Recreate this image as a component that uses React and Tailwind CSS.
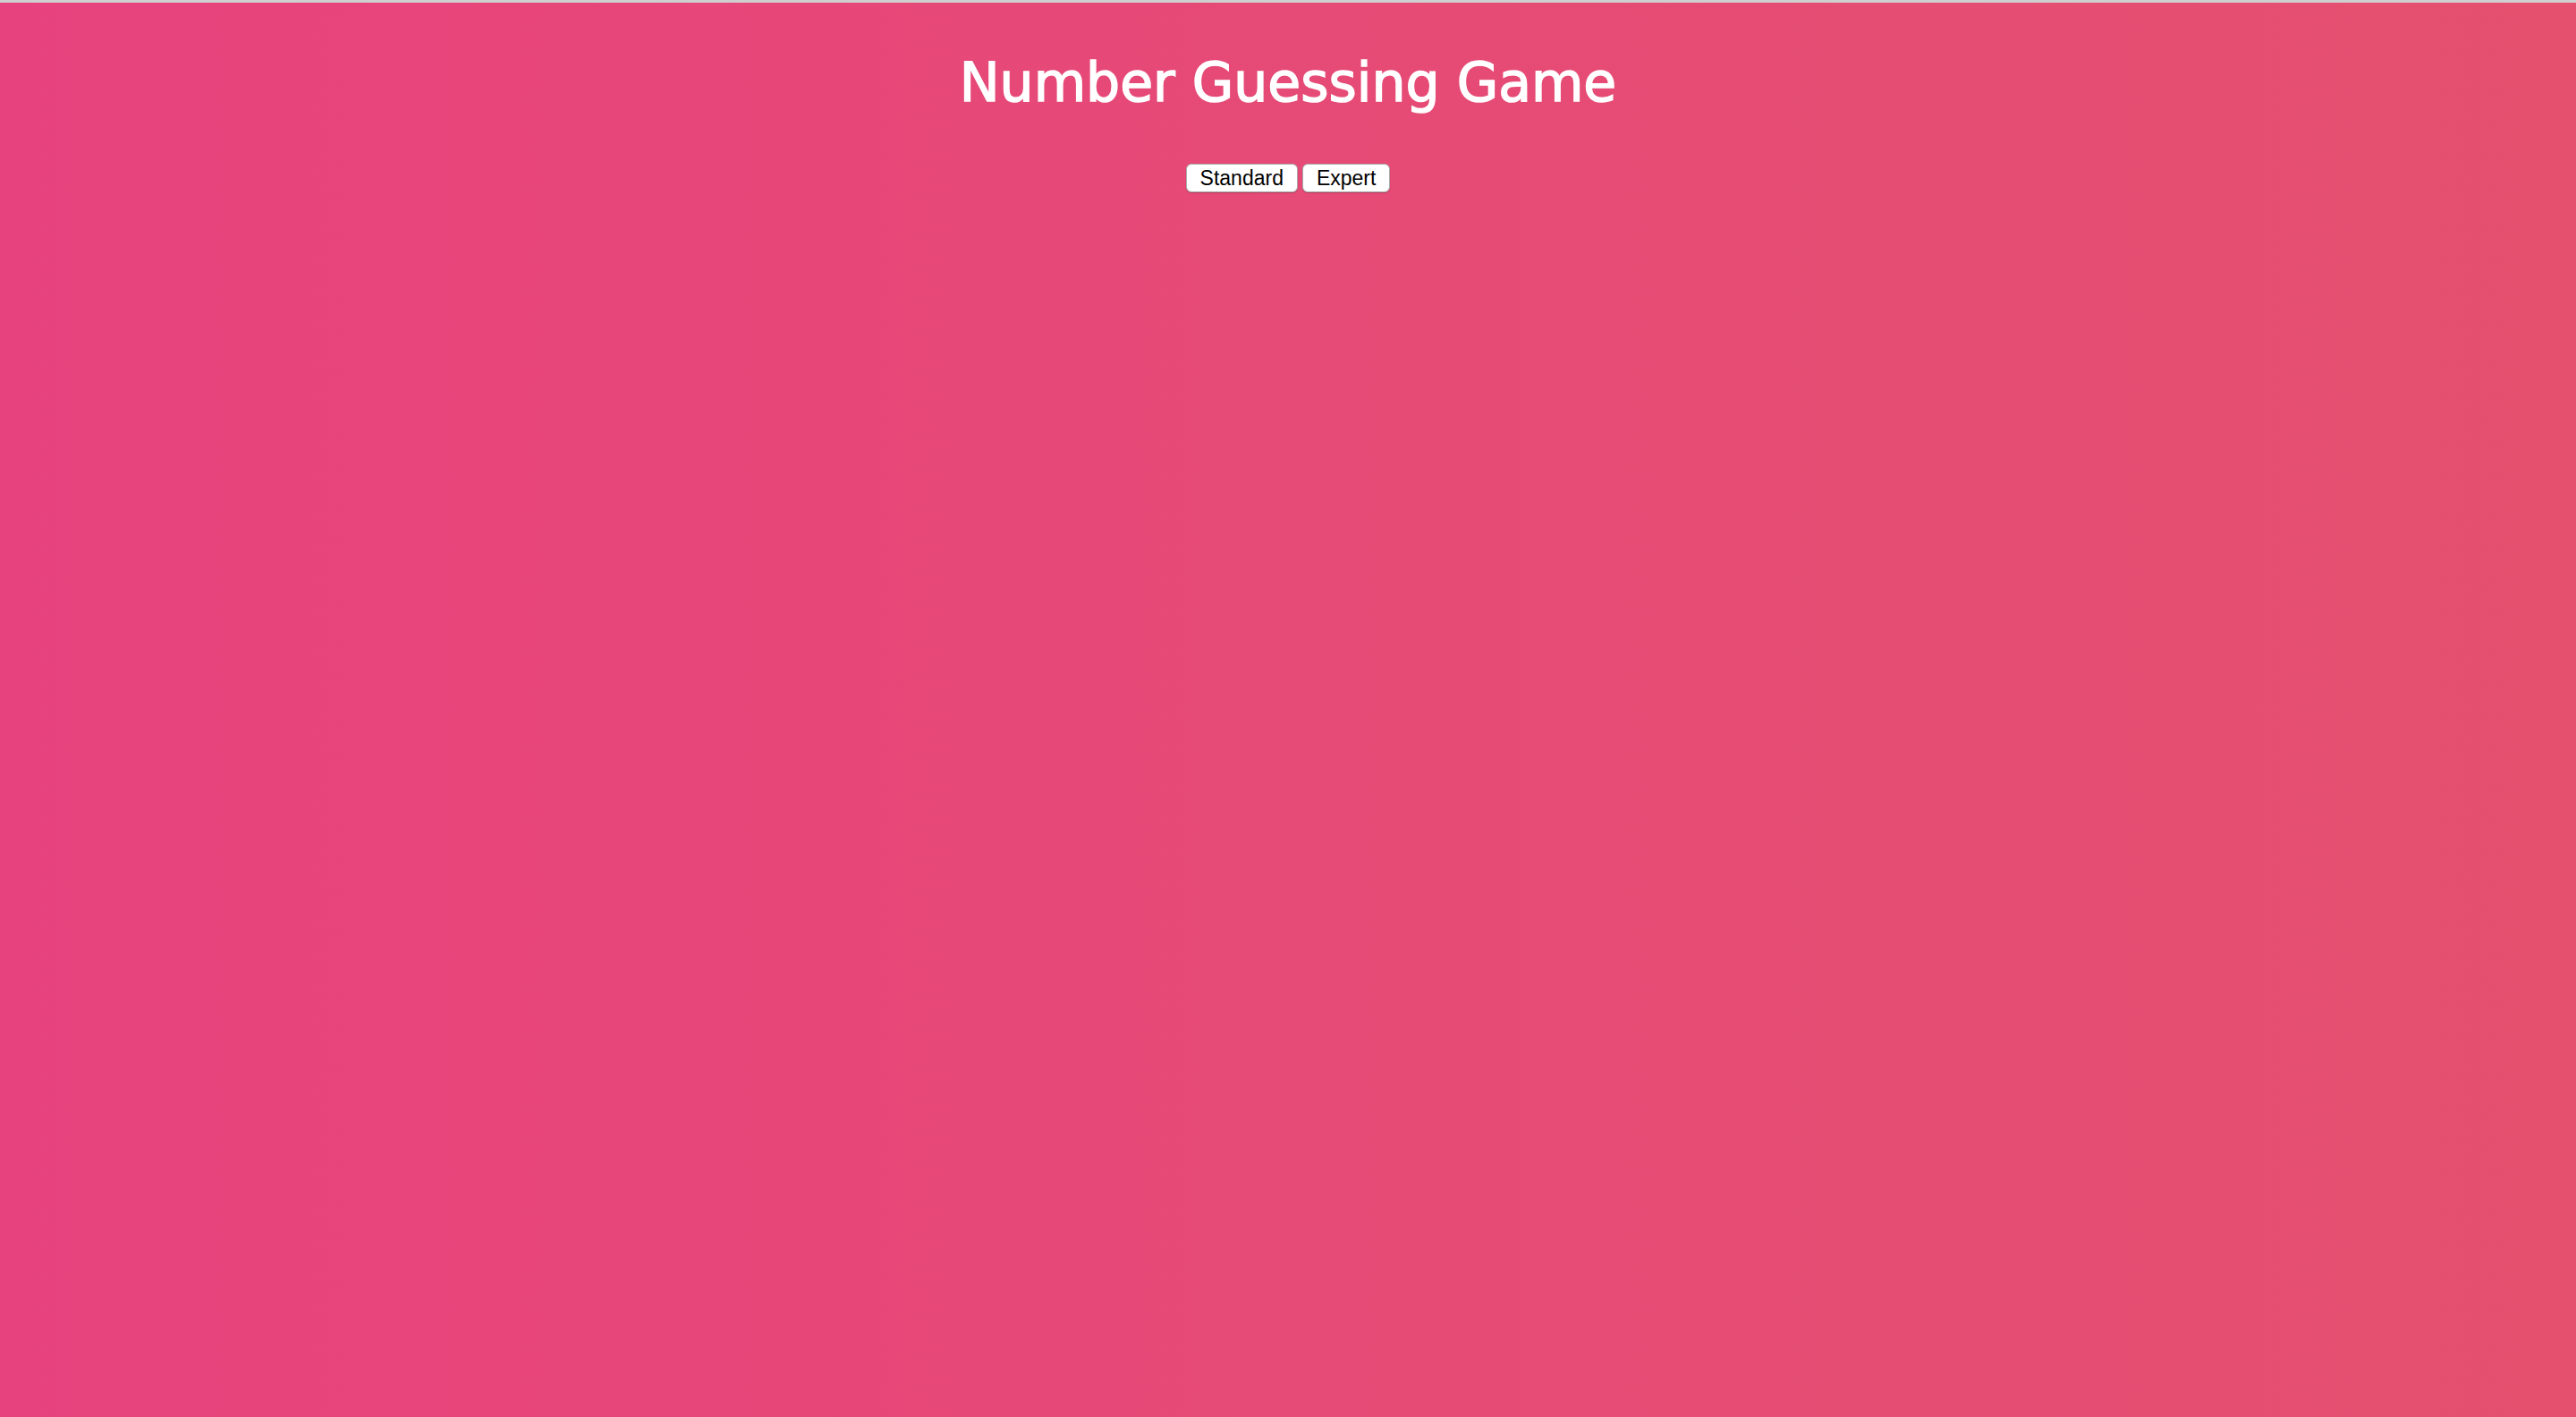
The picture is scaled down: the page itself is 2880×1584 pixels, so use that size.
import { useState } from 'react';

const levels = ['Standard', 'Expert'];

const App = () => {
  const [level, setLevel] = useState(null);

  return (
    <div className="min-h-screen w-full border-t-[3px] border-[#cfcfcf] bg-gradient-to-r from-[#e7427d] via-[#e64a76] to-[#e5506f] font-['Liberation_Sans',sans-serif]">
      <div className="flex flex-col items-center pt-[51px]">
        {/* Title */}
        <h1 className="text-[60px] leading-[76px] text-white font-['DejaVu_Sans',sans-serif] [-webkit-text-stroke:1.5px_white]">
          Number Guessing Game
        </h1>

        {/* Level picker */}
        <div className="mt-[53px] flex gap-[5px]">
          {levels.map((name) => (
            <button
              key={name}
              onClick={() => setLevel(name)}
              className="h-[32px] rounded-[6px] border border-[#a9a9a9] bg-white px-[15px] text-[23px] leading-none text-black shadow-[0_1px_1px_rgba(0,0,0,0.2)]"
            >
              {name}
            </button>
          ))}
        </div>
        {level && <p className="sr-only">{level}</p>}
      </div>
    </div>
  );
};

export default App;
